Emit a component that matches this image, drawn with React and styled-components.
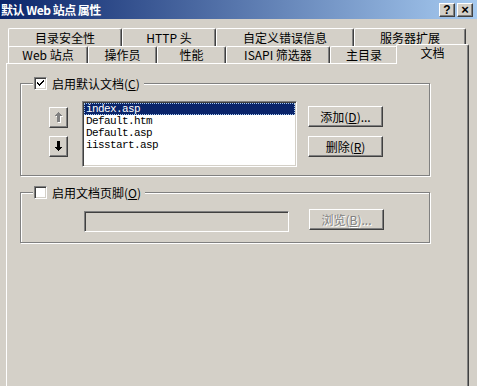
import React from "react";
import styled, { createGlobalStyle } from "styled-components";

const FACE = "#d4d0c8";
const FONT = `"Noto Sans CJK SC", "Liberation Sans", sans-serif`;

const GlobalStyle = createGlobalStyle`
  html, body {
    margin: 0;
    padding: 0;
    background: ${FACE};
  }
  body {
    font-family: ${FONT};
    font-size: 12px;
    color: #000;
  }
`;

const Window = styled.div`
  width: 477px;
  height: 386px;
  overflow: hidden;
  background: ${FACE};
  display: flex;
  flex-direction: column;
`;

const TitleBar = styled.div`
  height: 19px;
  display: flex;
  align-items: center;
  justify-content: space-between;
  background: linear-gradient(to right, #0a246a, #a6caf0);
  padding: 0 4px 0 1px;
`;

const TitleText = styled.div`
  color: #fff;
  font-weight: 700;
  font-size: 12px;
  line-height: 19px;
  white-space: pre;
  letter-spacing: -0.5px;
`;

const CaptionButtons = styled.div`
  display: flex;
  gap: 2px;
`;

const CaptionButton = styled.div`
  width: 16px;
  height: 14px;
  box-sizing: border-box;
  background: ${FACE};
  border: 1px solid;
  border-color: #fff #404040 #404040 #fff;
  box-shadow: inset -1px -1px #808080;
  display: flex;
  align-items: center;
  justify-content: center;
  font-family: "Liberation Sans", sans-serif;
  font-weight: 700;
  font-size: ${(p) => p.$size || 11}px;
  line-height: 1;
`;

const Body = styled.div`
  padding: 9px 0 0 6px;
  width: 463px;
`;

const TabRow = styled.div`
  display: flex;
  align-items: flex-start;
  height: ${(p) => p.$h}px;
  padding-left: 2px;
`;

const Tab = styled.div`
  width: ${(p) => p.$w}px;
  height: ${(p) => p.$h}px;
  box-sizing: border-box;
  flex: none;
  background: ${FACE};
  border-top: 1px solid #fff;
  border-left: 1px solid #fff;
  border-right: 1px solid #404040;
  box-shadow: inset -1px 0 #808080;
  border-radius: 2px 2px 0 0;
  text-align: center;
  line-height: ${(p) => p.$lh}px;
  white-space: pre;
`;

const SelectedTab = styled(Tab)`
  position: relative;
  margin-left: -2px;
  margin-top: -2px;
`;

const Panel = styled.div`
  height: 340px;
  box-sizing: border-box;
  border-top: 1px solid #fff;
  border-left: 1px solid #fff;
  border-right: 1px solid #404040;
  box-shadow: inset -1px 0 #808080;
  padding: 19px 0 0 13px;
`;

const GroupBox = styled.div`
  position: relative;
  width: 410px;
  height: ${(p) => p.$h}px;
  box-sizing: border-box;
  border: 1px solid #808080;
  box-shadow: inset 1px 1px #fff, 1px 1px #fff;
  margin-top: ${(p) => p.$mt || 0}px;
`;

const Legend = styled.div`
  position: absolute;
  top: -7px;
  left: 12px;
  display: flex;
  align-items: center;
  gap: 5px;
  padding: 0 4px 0 1px;
  background: ${FACE};
  line-height: 13px;
`;

const CheckBox = styled.div`
  width: 13px;
  height: 13px;
  box-sizing: border-box;
  background: #fff;
  border: 1px solid;
  border-color: #808080 #fff #fff #808080;
  box-shadow: inset 1px 1px #404040, inset -1px -1px ${FACE};
  display: flex;
  align-items: center;
  justify-content: center;
`;

const GroupBody = styled.div`
  display: flex;
  align-items: flex-start;
  padding: ${(p) => p.$pt}px 0 0 ${(p) => p.$pl}px;
`;

const ArrowColumn = styled.div`
  display: flex;
  flex-direction: column;
  gap: 8px;
  padding-top: 6px;
  margin-right: 14px;
`;

const RaisedButton = styled.div`
  width: ${(p) => p.$w}px;
  height: 21px;
  box-sizing: border-box;
  background: ${FACE};
  border: 1px solid;
  border-color: #fff #404040 #404040 #fff;
  box-shadow: inset -1px -1px #808080;
  display: flex;
  align-items: center;
  justify-content: center;
  line-height: 19px;
  white-space: pre;
  color: ${(p) => (p.$disabled ? "#808080" : "#000")};
  text-shadow: ${(p) => (p.$disabled ? "1px 1px #fff" : "none")};
`;

const ListBox = styled.div`
  width: 215px;
  height: 66px;
  box-sizing: border-box;
  background: #fff;
  border: 1px solid;
  border-color: #808080 #fff #fff #808080;
  box-shadow: inset 1px 1px #404040, inset -1px -1px ${FACE};
  padding: 1px;
  margin-right: 11px;
`;

const ListItem = styled.div`
  height: 12px;
  line-height: 12px;
  padding-left: 2px;
  font-family: "Liberation Mono", monospace;
  font-size: 11px;
  letter-spacing: -0.6px;
  background: ${(p) => (p.$selected ? "#0a246a" : "transparent")};
  color: ${(p) => (p.$selected ? "#fff" : "#000")};
  outline: ${(p) => (p.$selected ? "1px dotted #a6caf0" : "none")};
  outline-offset: -1px;
`;

const ButtonColumn = styled.div`
  display: flex;
  flex-direction: column;
  gap: 9px;
  padding-top: 5px;
`;

const TextField = styled.div`
  width: 205px;
  height: 21px;
  box-sizing: border-box;
  background: ${FACE};
  border: 1px solid;
  border-color: #808080 #fff #fff #808080;
  box-shadow: inset 1px 1px #404040, inset -1px -1px ${FACE};
  margin: 2px 20px 0 0;
`;

const Check = () => (
  <svg width="9" height="9" viewBox="0 0 9 9" shapeRendering="crispEdges">
    <path d="M1 3h1v1h1v1h1V4h1V3h1V2h1V1h1v2H7v1H6v1H5v1H4v1H3V6H2V5H1z" fill="#000" />
  </svg>
);

const Arrow = ({ up, disabled }) => {
  const d = up
    ? "M3 0h1v1h1v1h1v1h1v1H5v6H2V4H0V3h1V2h1V1h1z"
    : "M2 0h3v6h2v1H6v1H5v1H4v1H3V9H2V8H1V7H0V6h2z";
  return (
    <svg width="8" height="11" viewBox="0 0 8 11" shapeRendering="crispEdges">
      {disabled && <path d={d} fill="#fff" transform="translate(1 1)" />}
      <path d={d} fill={disabled ? "#808080" : "#000"} />
    </svg>
  );
};

const backTabs = [
  ["目录安全性", 114],
  ["HTTP 头", 94],
  ["自定义错误信息", 138],
  ["服务器扩展", 112],
];

const frontTabs = [
  ["Web 站点", 80],
  ["操作员", 69],
  ["性能", 69],
  ["ISAPI 筛选器", 104],
  ["主目录", 68],
];

const docs = ["index.asp", "Default.htm", "Default.asp", "iisstart.asp"];

export default function App() {
  return (
    <Window>
      <GlobalStyle />
      <TitleBar>
        <TitleText>默认 Web 站点 属性</TitleText>
        <CaptionButtons>
          <CaptionButton $size={12}>?</CaptionButton>
          <CaptionButton $size={13}>×</CaptionButton>
        </CaptionButtons>
      </TitleBar>
      <Body>
        <TabRow $h={18}>
          {backTabs.map(([label, w]) => (
            <Tab key={label} $w={w} $h={24} $lh={17}>
              {label}
            </Tab>
          ))}
        </TabRow>
        <TabRow $h={17}>
          {frontTabs.map(([label, w]) => (
            <Tab key={label} $w={w} $h={17} $lh={16}>
              {label}
            </Tab>
          ))}
          <SelectedTab $w={73} $h={20} $lh={16}>
            文档
          </SelectedTab>
        </TabRow>
        <Panel>
          <GroupBox $h={93}>
            <Legend>
              <CheckBox>
                <Check />
              </CheckBox>
              <span>
                启用默认文档(<u>C</u>)
              </span>
            </Legend>
            <GroupBody $pt={17} $pl={28}>
              <ArrowColumn>
                <RaisedButton $w={19}>
                  <Arrow up disabled />
                </RaisedButton>
                <RaisedButton $w={19}>
                  <Arrow />
                </RaisedButton>
              </ArrowColumn>
              <ListBox>
                {docs.map((doc, i) => (
                  <ListItem key={doc} $selected={i === 0}>
                    {doc}
                  </ListItem>
                ))}
              </ListBox>
              <ButtonColumn>
                <RaisedButton $w={75}>
                  添加(<u>D</u>)...
                </RaisedButton>
                <RaisedButton $w={75}>
                  删除(<u>R</u>)
                </RaisedButton>
              </ButtonColumn>
            </GroupBody>
          </GroupBox>
          <GroupBox $h={51} $mt={16}>
            <Legend>
              <CheckBox />
              <span>
                启用文档页脚(<u>O</u>)
              </span>
            </Legend>
            <GroupBody $pt={16} $pl={63}>
              <TextField />
              <RaisedButton $w={75} $disabled>
                浏览(<u>B</u>)...
              </RaisedButton>
            </GroupBody>
          </GroupBox>
        </Panel>
      </Body>
    </Window>
  );
}
